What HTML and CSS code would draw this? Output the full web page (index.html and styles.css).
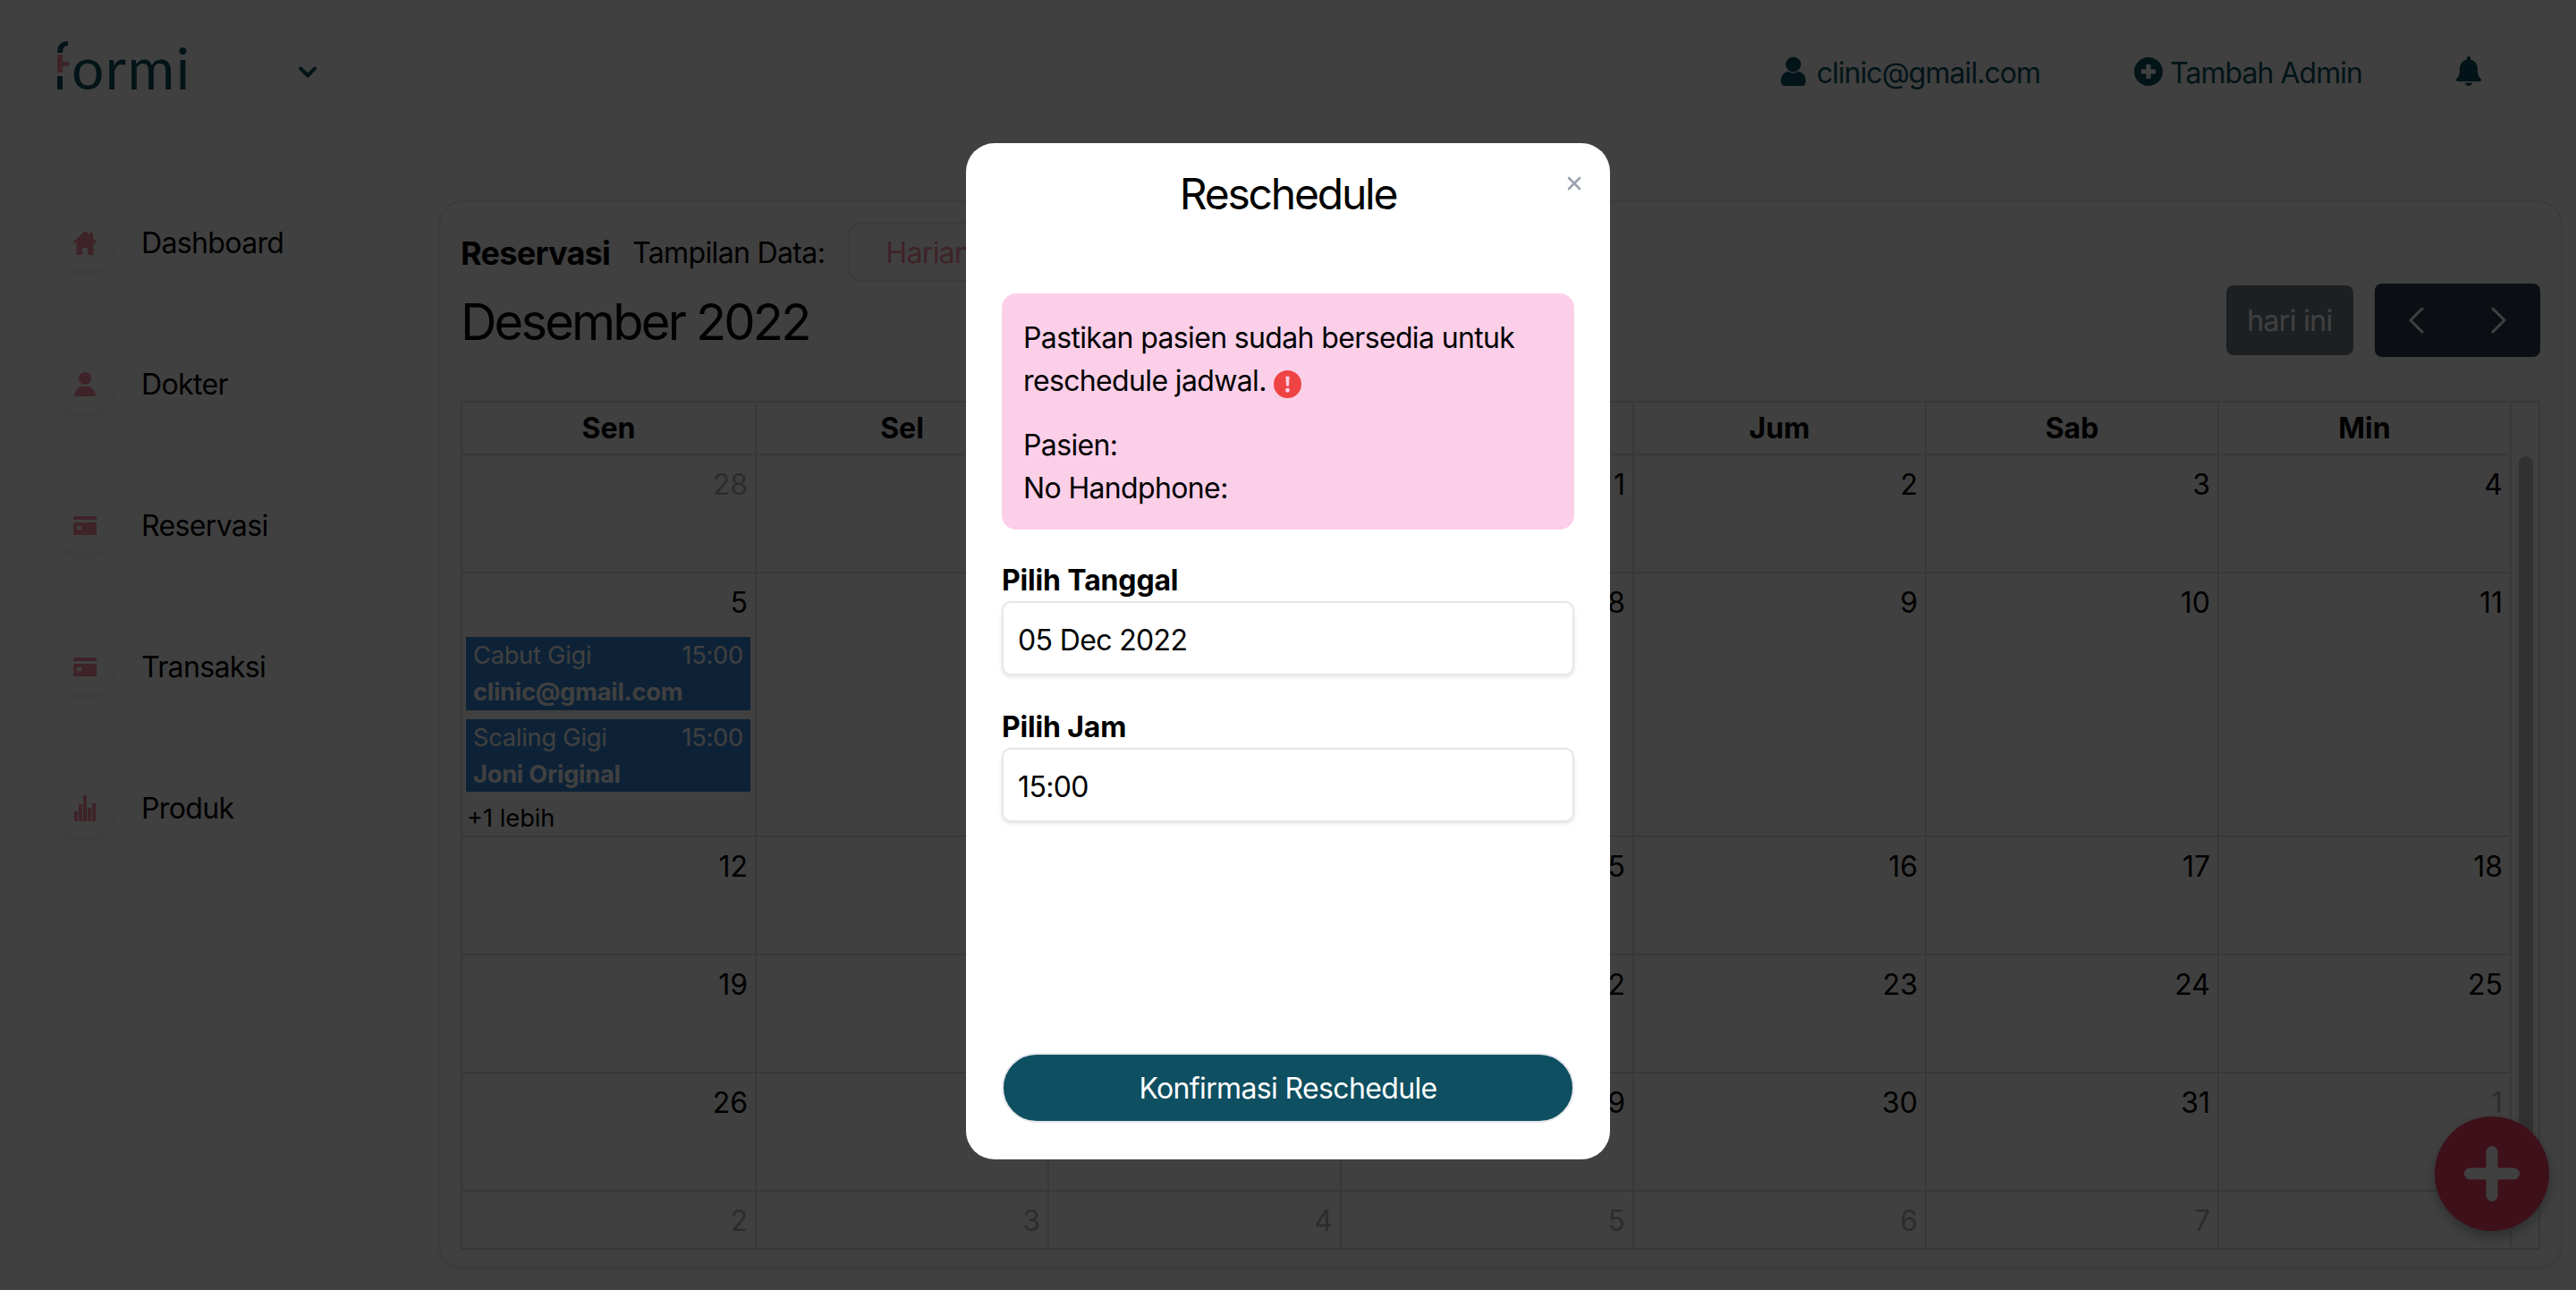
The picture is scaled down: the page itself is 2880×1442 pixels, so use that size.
FILE: index.html
```html
<!DOCTYPE html>
<html lang="id">
<head>
<meta charset="utf-8">
<title>Reschedule</title>
<link rel="stylesheet" href="styles.css">
</head>
<body>
<div class="page">
  <header class="topbar">
    <div class="brand">
      <div class="logo">
        <svg class="logo-f" viewBox="0 0 13 54" width="13" height="54" aria-hidden="true">
          <path class="logo-dark" d="M0 13C0 5 4 0 12 0v5C8 5 6 8 6 13z"/>
          <path class="logo-red" d="M0 15h6v8h7v5H6v7H0z"/>
          <path class="logo-dark" d="M0 39h6v15H0z"/>
        </svg>
        <span class="logo-text">ormi</span>
      </div>
      <svg class="brand-chevron" viewBox="0 0 20 14" width="20" height="14" aria-hidden="true"><path d="M2 2.500l8 8 8-8" fill="none" stroke="currentColor" stroke-width="4" stroke-linecap="round" stroke-linejoin="round"/></svg>
    </div>
    <nav class="top-actions">
      <a class="top-link">
        <svg viewBox="0 0 28 33" width="28" height="33" aria-hidden="true"><circle cx="14" cy="9" r="8.600"/><path d="M0 28c0-7 4-11 9-11 1.600 1 3 1.700 5 1.700s3.400-.7 5-1.700c5 0 9 4 9 11 0 3-2 5-4 5H4c-2 0-4-2-4-5z"/></svg>
        <span>clinic@gmail.com</span>
      </a>
      <a class="top-link top-link-plus">
        <svg viewBox="0 0 32 32" width="32" height="32" aria-hidden="true"><path fill-rule="evenodd" d="M16 0a16 16 0 1 1 0 32a16 16 0 0 1 0-32zM13.500 8v5.500H8v5h5.500V24h5v-5.500H24v-5h-5.500V8z"/></svg>
        <span>Tambah Admin</span>
      </a>
      <a class="top-bell">
        <svg viewBox="0 0 28 33" width="28" height="33" aria-hidden="true"><path d="M14 0c1.300 0 2.200 1 2.200 2.300v1.500C21 4.800 24 9 24 14c0 7 1.500 9 3.500 11 1 1 .5 3-1.200 3H1.700C0 28-.5 26 .5 25 2.500 23 4 21 4 14c0-5 3-9.200 7.800-10.200V2.300C11.800 1 12.700 0 14 0zM10 29.500h8c0 2-1.800 3.500-4 3.500s-4-1.500-4-3.500z"/></svg>
      </a>
    </nav>
  </header>

  <main class="layout">
    <aside class="sidebar">
      <a class="side-item">
        <span class="side-icon"><svg viewBox="0 0 26 27" width="26" height="27" aria-hidden="true"><path d="M13 0L0 12.500l1.500 1.700L3.500 12.500V27H10v-8h6v8h6.500V12.500l2 1.700 1.500-1.700-4-3.800V2h-4v2.500z"/></svg></span>
        <span class="side-text">Dashboard</span>
      </a>
      <a class="side-item">
        <span class="side-icon"><svg viewBox="0 0 24 27" width="24" height="27" aria-hidden="true"><circle cx="12" cy="7" r="7"/><path d="M0 27c0-6 4-10 8-11h8c4 1 8 5 8 11z"/></svg></span>
        <span class="side-text">Dokter</span>
      </a>
      <a class="side-item">
        <span class="side-icon"><svg viewBox="0 0 26 21" width="26" height="21" aria-hidden="true"><path fill-rule="evenodd" d="M1 0h24a1 1 0 0 1 1 1v3H0V1a1 1 0 0 1 1-1zM0 7h26v13a1 1 0 0 1-1 1H1a1 1 0 0 1-1-1zM4 11v4h5v-4z"/></svg></span>
        <span class="side-text">Reservasi</span>
      </a>
      <a class="side-item">
        <span class="side-icon"><svg viewBox="0 0 26 21" width="26" height="21" aria-hidden="true"><path fill-rule="evenodd" d="M1 0h24a1 1 0 0 1 1 1v3H0V1a1 1 0 0 1 1-1zM0 7h26v13a1 1 0 0 1-1 1H1a1 1 0 0 1-1-1zM4 11v4h5v-4z"/></svg></span>
        <span class="side-text">Transaksi</span>
      </a>
      <a class="side-item">
        <span class="side-icon"><svg viewBox="0 0 24 29" width="24" height="29" aria-hidden="true"><path d="M0 18h4v11H0zM5 10h4v19H5zM10 0h4v29h-4zM15 14h4v15h-4zM20 9h4v20h-4z"/></svg></span>
        <span class="side-text">Produk</span>
      </a>
    </aside>

    <section class="card">
      <div class="card-head">
        <h2 class="card-title">Reservasi</h2>
        <span class="card-label">Tampilan Data:</span>
        <div class="view-select">Harian</div>
      </div>
      <div class="toolbar">
        <h1 class="month">Desember 2022</h1>
        <div class="toolbar-buttons">
          <button class="btn-today" disabled>hari ini</button>
          <div class="btn-nav">
            <svg viewBox="0 0 18 30" width="18" height="30" aria-hidden="true"><path d="M16 2L3 15l13 13" fill="none" stroke="currentColor" stroke-width="3" stroke-linecap="round" stroke-linejoin="round"/></svg>
            <svg viewBox="0 0 18 30" width="18" height="30" aria-hidden="true"><path d="M2 2l13 13L2 28" fill="none" stroke="currentColor" stroke-width="3" stroke-linecap="round" stroke-linejoin="round"/></svg>
          </div>
        </div>
      </div>

      <div class="cal">
        <div class="head-cell">Sen</div><div class="head-cell">Sel</div><div class="head-cell">Rab</div><div class="head-cell">Kam</div><div class="head-cell">Jum</div><div class="head-cell">Sab</div><div class="head-cell">Min</div>
        <div class="gutter"><div class="thumb"></div></div>

        <div class="day"><span class="num dim">28</span></div><div class="day"><span class="num dim">29</span></div><div class="day"><span class="num dim">30</span></div><div class="day"><span class="num">1</span></div><div class="day"><span class="num">2</span></div><div class="day"><span class="num">3</span></div><div class="day"><span class="num">4</span></div>

        <div class="day">
          <span class="num">5</span>
          <div class="events">
            <div class="event"><div class="event-top"><span>Cabut Gigi</span><span>15:00</span></div><strong>clinic@gmail.com</strong></div>
            <div class="event"><div class="event-top"><span>Scaling Gigi</span><span>15:00</span></div><strong>Joni Original</strong></div>
            <div class="more">+1 lebih</div>
          </div>
        </div>
        <div class="day"><span class="num">6</span></div><div class="day"><span class="num">7</span></div><div class="day"><span class="num">8</span></div><div class="day"><span class="num">9</span></div><div class="day"><span class="num">10</span></div><div class="day"><span class="num">11</span></div>

        <div class="day"><span class="num">12</span></div><div class="day"><span class="num">13</span></div><div class="day"><span class="num">14</span></div><div class="day"><span class="num">15</span></div><div class="day"><span class="num">16</span></div><div class="day"><span class="num">17</span></div><div class="day"><span class="num">18</span></div>

        <div class="day"><span class="num">19</span></div><div class="day"><span class="num">20</span></div><div class="day"><span class="num">21</span></div><div class="day"><span class="num">22</span></div><div class="day"><span class="num">23</span></div><div class="day"><span class="num">24</span></div><div class="day"><span class="num">25</span></div>

        <div class="day"><span class="num">26</span></div><div class="day"><span class="num">27</span></div><div class="day"><span class="num">28</span></div><div class="day"><span class="num">29</span></div><div class="day"><span class="num">30</span></div><div class="day"><span class="num">31</span></div><div class="day"><span class="num dim">1</span></div>

        <div class="day last"><span class="num dim">2</span></div><div class="day last"><span class="num dim">3</span></div><div class="day last"><span class="num dim">4</span></div><div class="day last"><span class="num dim">5</span></div><div class="day last"><span class="num dim">6</span></div><div class="day last"><span class="num dim">7</span></div><div class="day last"><span class="num dim">8</span></div>
      </div>
    </section>
  </main>

  <button class="fab" aria-label="Tambah"><svg viewBox="0 0 62 62" width="62" height="62" aria-hidden="true"><path d="M31 6.500v49M6.500 31h49" fill="none" stroke="currentColor" stroke-width="13" stroke-linecap="round"/></svg></button>
</div>

<div class="overlay">
  <div class="modal">
    <button class="close" aria-label="Tutup"><svg viewBox="0 0 16 16" width="16" height="16" aria-hidden="true"><path d="M2 2l12 12M14 2L2 14" fill="none" stroke="currentColor" stroke-width="2.600" stroke-linecap="round"/></svg></button>
    <h3 class="modal-title">Reschedule</h3>
    <div class="alert">
      <p>Pastikan pasien sudah bersedia untuk reschedule jadwal. <svg class="alert-icon" viewBox="0 0 32 32" width="31" height="31" aria-hidden="true"><path fill-rule="evenodd" d="M16 0a16 16 0 1 1 0 32a16 16 0 0 1 0-32zM13.800 7l.7 11h3l.7-11zM16 20.500a2.500 2.500 0 1 0 0 5a2.500 2.500 0 0 0 0-5z"/></svg></p>
      <p>Pasien:<br>No Handphone:</p>
    </div>
    <label class="field-label" for="tgl">Pilih Tanggal</label>
    <input class="field" id="tgl" type="text" value="05 Dec 2022">
    <label class="field-label second" for="jam">Pilih Jam</label>
    <input class="field" id="jam" type="text" value="15:00">
    <button class="confirm">Konfirmasi Reschedule</button>
  </div>
</div>
</body>
</html>
```
FILE: styles.css
```css
* { box-sizing: border-box; }
html, body { margin: 0; height: 100%; overflow: hidden; }
body { font-family: Inter, "Liberation Sans", sans-serif; font-size: 32px; line-height: 48px; letter-spacing: -.02em; color: #000; background: #fff; }
h1, h2, h3, p { margin: 0; }
button { font-family: inherit; letter-spacing: inherit; }

.page { height: 1442px; position: relative; overflow: hidden; }

.topbar { height: 164px; display: flex; align-items: center; justify-content: space-between; padding: 0 106px 0 64px; margin-bottom: 60px; color: #0e4f61; }
.brand { display: flex; align-items: center; }
.logo { display: flex; align-items: flex-end; height: 54px; width: 270px; margin-bottom: 18px; }
.logo-f { display: block; flex: none; }
.logo-dark { fill: #0e4f61; }
.logo-red { fill: #f58a9f; }
.logo-text { font-family: Lato, sans-serif; font-size: 64px; line-height: 54px; letter-spacing: 1.500px; margin-left: 3px; height: 54px; position: relative; top: 3px; }
.brand-chevron { display: block; margin-bottom: 2px; }
.top-actions { display: flex; align-items: center; gap: 105px; }
.top-link { display: flex; align-items: center; gap: 12px; letter-spacing: -.03em; }
.top-link-plus { gap: 8px; }
.top-link svg, .top-bell svg { display: block; fill: currentColor; margin-top: -5px; }
.top-bell { display: block; }

.layout { display: flex; align-items: flex-start; padding-right: 15px; }
.sidebar { width: 490px; flex: none; padding: 16px 0 0 64px; display: flex; flex-direction: column; gap: 96px; }
.side-item { display: flex; align-items: center; gap: 32px; height: 62px; }
.side-text { padding-top: 2px; }
.side-icon { width: 62px; height: 62px; flex: none; border-radius: 24px; background: #fff; box-shadow: 0 4px 10px rgba(0,0,0,.07); display: flex; align-items: center; justify-content: center; }
.side-icon svg { fill: #f58a9f; display: block; }

.card { flex: 1; height: 1194px; border: 2px solid #ebebeb; border-radius: 28px; box-shadow: 0 2px 6px rgba(0,0,0,.06); padding: 22px 23px 0 23px; }
.card-head { display: flex; align-items: center; height: 67px; }
.card-title { font-size: 36px; line-height: 48px; font-weight: 700; margin-right: 25px; padding-top: 2px; letter-spacing: -.02em; }
.card-label { margin-right: 26px; padding-top: 2px; }
.view-select { width: 300px; height: 67px; border: 2px solid #e5e7eb; border-radius: 16px; padding: 9px 40px; color: #f58a9f; }
.toolbar { display: flex; align-items: center; justify-content: space-between; margin-top: 2px; height: 82px; }
.month { font-size: 56px; font-weight: 400; line-height: 77px; padding-top: 5px; letter-spacing: -.05em; }
.toolbar-buttons { display: flex; align-items: center; gap: 24px; }
.btn-today { width: 142px; height: 78px; border: 0; border-radius: 8px; background: #2c3e50; opacity: .65; color: #fff; font-size: 32px; padding: 0; }
.btn-nav { width: 185px; height: 82px; border-radius: 8px; background: #2c3e50; color: #fff; display: flex; align-items: center; justify-content: space-between; padding: 0 37px; }
.btn-nav svg { display: block; }

.cal { margin-top: 49px; width: 2325px; height: 949px; border: 2px solid #ddd; display: grid; grid-template-columns: 329px repeat(6, 327px) 30px; grid-template-rows: 59px 132px 295px 132px 132px 132px 63px; letter-spacing: 0; }
.head-cell { border-right: 2px solid #ddd; border-bottom: 2px solid #ddd; font-weight: 700; text-align: center; line-height: 58px; }
.gutter { grid-column: 8; grid-row: 1 / -1; padding: 60px 6px 0 8px; }
.thumb { width: 16px; height: 830px; border-radius: 8px; background: #c1c1c1; }
.day { border-right: 2px solid #ddd; border-bottom: 2px solid #ddd; padding: 9px 8px 0 4px; text-align: right; min-width: 0; }
.day.last { border-bottom: 0; }
.num { display: block; }
.dim { opacity: .3; }
.events { text-align: left; margin: 14px -3px 0 0; display: flex; flex-direction: column; gap: 10px; }
.event { background: #3788d8; color: #fff; font-size: 27.200px; line-height: 41px; padding: 0 8px; height: 82px; letter-spacing: -.008em; }
.event:nth-child(2) { height: 81px; }
.event-top { display: flex; justify-content: space-between; }
.event strong { display: block; font-weight: 700; }
.more { font-size: 27.200px; line-height: 40px; padding-left: 1px; }

.fab { position: absolute; left: 2722px; top: 1248px; width: 128px; height: 128px; border: 0; border-radius: 50%; background: #f44068; color: #fff; box-shadow: 0 6px 14px rgba(0,0,0,.3); display: flex; align-items: center; justify-content: center; padding: 0; }
.fab svg { display: block; }

.overlay { position: fixed; inset: 0; background: rgba(0,0,0,.75); display: flex; justify-content: center; align-items: flex-start; padding-top: 160px; }
.modal { position: relative; width: 720px; height: 1136px; background: #fff; border-radius: 32px; padding: 25px 40px 41px; display: flex; flex-direction: column; }
.close { position: absolute; top: 37px; right: 32px; width: 16px; height: 16px; padding: 0; border: 0; background: none; color: #9ca3af; }
.close svg { display: block; }
.modal-title { font-size: 48px; line-height: 64px; font-weight: 400; text-align: center; margin-bottom: 79px; letter-spacing: -.046em; }
.alert { background: #fbcfe8; border-radius: 16px; padding: 26px 24px 22px; }
.alert p + p { margin-top: 24px; }
.alert-icon { fill: #ef4444; vertical-align: -8px; }
.field-label { display: block; font-weight: 700; margin-top: 32px; padding-top: 2px; line-height: 46px; letter-spacing: -.005em; }
.field-label.second { margin-top: 33px; }
.field { display: block; width: 100%; height: 83px; border: 2px solid #e5e7eb; border-radius: 10px; background: #fff; box-shadow: 0 2px 4px rgba(0,0,0,.1); font: 32px Inter, sans-serif; letter-spacing: -.02em; color: #000; padding: 3px 16px 0; outline: 0; }
.confirm { margin-top: auto; width: 100%; height: 78px; border: 2px solid #e5e7eb; border-radius: 40px; background: #0e4f61; color: #fff; font-size: 32px; line-height: 48px; padding: 2px 0 0; }
```
